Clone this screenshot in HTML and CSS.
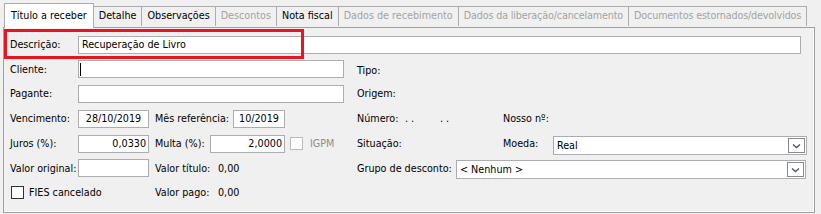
FILE: index.html
```html
<!DOCTYPE html>
<html lang="pt-BR">
<head>
<meta charset="utf-8">
<title>Título a receber</title>
<link rel="stylesheet" href="styles.css">
</head>
<body>
<div class="window">
  <div class="tabs">
    <div class="tab active">Título a receber</div>
    <div class="tab">Detalhe</div>
    <div class="tab">Observações</div>
    <div class="tab disabled">Descontos</div>
    <div class="tab">Nota fiscal</div>
    <div class="tab disabled">Dados de recebimento</div>
    <div class="tab disabled tight">Dados da liberação/cancelamento</div>
    <div class="tab disabled tight">Documentos estornados/devolvidos</div>
  </div>
  <div class="panel">
    <div class="highlight"></div>

    <div class="row r25">
      <span class="lbl">Descrição:</span>
      <div class="inp w-desc">Recuperação de Livro</div>
    </div>

    <div class="row r24">
      <div class="left">
        <span class="lbl">Cliente:</span>
        <div class="inp w-long"><span class="caret"></span></div>
      </div>
      <div class="right"><span class="rtext up1">Tipo:</span></div>
    </div>

    <div class="row r25">
      <div class="left">
        <span class="lbl">Pagante:</span>
        <div class="inp w-long"></div>
      </div>
      <div class="right"><span class="rtext">Origem:</span></div>
    </div>

    <div class="row r25">
      <div class="left">
        <span class="lbl">Vencimento:</span>
        <div class="inp w-short center">28/10/2019</div>
        <span class="lbl2 w-mes">Mês referência:</span>
        <div class="inp w-mesinp center">10/2019</div>
      </div>
      <div class="right">
        <span class="w-num">Número:</span>
        <span class="w-dots">. .</span>
        <span class="w-dots2">. .</span>
        <span>Nosso nº:</span>
      </div>
    </div>

    <div class="row r25">
      <div class="left">
        <span class="lbl">Juros (%):</span>
        <div class="inp w-short num">0,0330</div>
        <span class="lbl2 w-multa">Multa (%):</span>
        <div class="inp w-multainp num">2,0000</div>
        <span class="check disabled-check"></span>
        <span class="muted">IGPM</span>
      </div>
      <div class="right">
        <span class="w-sit">Situação:</span>
        <span class="w-moeda">Moeda:</span>
        <div class="combo w-combo1">
          <span class="combo-text">Real</span>
          <span class="combo-btn"><svg width="9" height="6" viewBox="0 0 9 6"><path d="M1 1.5 L4.5 4.5 L8 1.5" fill="none" stroke="#4d5a66" stroke-width="1.4"/></svg></span>
        </div>
      </div>
    </div>

    <div class="row r24">
      <div class="left">
        <span class="lbl">Valor original:</span>
        <div class="inp w-short"></div>
        <span class="lbl2 w-valor">Valor título:</span>
        <span>0,00</span>
      </div>
      <div class="right">
        <span class="w-grupo">Grupo de desconto:</span>
        <div class="combo w-combo2">
          <span class="combo-text">&lt; Nenhum &gt;</span>
          <span class="combo-btn"><svg width="9" height="6" viewBox="0 0 9 6"><path d="M1 1.5 L4.5 4.5 L8 1.5" fill="none" stroke="#4d5a66" stroke-width="1.4"/></svg></span>
        </div>
      </div>
    </div>

    <div class="row r24">
      <div class="left">
        <div class="fies">
          <span class="check"></span>
          <span>FIES cancelado</span>
        </div>
        <span class="w-valor">Valor pago:</span>
        <span>0,00</span>
      </div>
    </div>
  </div>
</div>
</body>
</html>
```

FILE: styles.css
```css
html, body {
  margin: 0;
  padding: 0;
  background: #f0f0f0;
}

body {
  font-family: Tahoma, "DejaVu Sans Condensed", "Liberation Sans", sans-serif;
  font-size: 10.7px;
  color: #000;
  width: 821px;
  height: 214px;
  overflow: hidden;
  white-space: nowrap;
}

.window {
  padding: 0 6px 0 3px;
}

/* Tabs */
.tabs {
  display: flex;
  align-items: flex-end;
  height: 27px;
  padding-left: 1px;
  position: relative;
  z-index: 2;
}

.tab {
  height: 20px;
  box-sizing: border-box;
  border: 1px solid #acacac;
  border-bottom: none;
  margin-left: -1px;
  padding: 0 5px;
  line-height: 18px;
  background: #f0f0f0;
  white-space: nowrap;
  margin-bottom: 1px;
}

.tab:first-child {
  margin-left: 0;
}

.tab.active {
  height: 25px;
  line-height: 23px;
  background: #fff;
  margin-bottom: -1px;
  padding: 0 6px;
  position: relative;
  z-index: 1;
}

.tab.disabled {
  color: #a3a3a3;
}

.tab.tight {
  letter-spacing: -0.15px;
}

/* Panel */
.panel {
  position: relative;
  height: 186px;
  box-sizing: border-box;
  border: 1px solid #a0a0a0;
  box-shadow: inset -1px -1px 0 #fff;
  padding: 4px 0 0 6px;
  background: #f0f0f0;
}

.highlight {
  position: absolute;
  left: 0;
  top: 1px;
  width: 300px;
  height: 30px;
  box-sizing: border-box;
  border: 3px solid #e8141f;
  pointer-events: none;
}

.row {
  display: flex;
  align-items: center;
}

.r24 { height: 24px; }
.r25 { height: 25px; }

.left {
  display: flex;
  align-items: center;
  width: 347px;
  flex: none;
}

.right {
  display: flex;
  align-items: center;
  flex: 1;
}

.lbl {
  width: 68px;
  flex: none;
}

.lbl2 { flex: none; }

.inp {
  height: 18px;
  box-sizing: border-box;
  border: 1px solid #abadb3;
  background: #fff;
  line-height: 16px;
  padding: 0 3px;
  white-space: nowrap;
  flex: none;
  display: flex;
  align-items: center;
}

.inp.center { justify-content: center; }
.inp.num { justify-content: flex-end; padding-right: 2px; }

.caret {
  display: block;
  width: 1px;
  height: 13px;
  background: #000;
  margin-left: -2px;
}

.w-desc { width: 723px; }
.w-long { width: 266px; }
.w-short { width: 71px; margin-right: 6px; }
.w-mes { width: 78px; }
.w-mesinp { width: 52px; }
.w-multa { width: 55px; }
.w-multainp { width: 75px; margin-right: 5px; }
.w-valor { width: 63px; flex: none; }

.up1 { margin-top: 3px; }

.w-num { width: 48px; }
.w-dots { width: 35px; }
.w-dots2 { width: 63px; }

.w-sit { width: 146px; }
.w-moeda { width: 50px; }
.w-grupo { width: 99px; }

.check {
  display: inline-block;
  width: 13px;
  height: 13px;
  box-sizing: border-box;
  border: 1px solid #333;
  background: #fff;
  flex: none;
}

.disabled-check {
  border-color: #bcbcbc;
  margin-right: 7px;
}

.muted { color: #8d8d8d; }

.fies {
  display: flex;
  align-items: center;
  gap: 5px;
  width: 144px;
  padding-left: 1px;
  flex: none;
}

.combo {
  display: flex;
  align-items: center;
  height: 19px;
  box-sizing: border-box;
  border: 1px solid #abadb3;
  background: #fff;
  padding: 0 1px 0 3px;
}

.combo-text { flex: 1; white-space: nowrap; }

.combo-btn {
  width: 17px;
  height: 15px;
  box-sizing: border-box;
  border: 1px solid #8a8a8a;
  background: #fff;
  display: flex;
  align-items: center;
  justify-content: center;
}

.w-combo1 { width: 254px; margin-top: 4px; }
.w-combo2 { width: 350px; margin-top: 3px; }
```
